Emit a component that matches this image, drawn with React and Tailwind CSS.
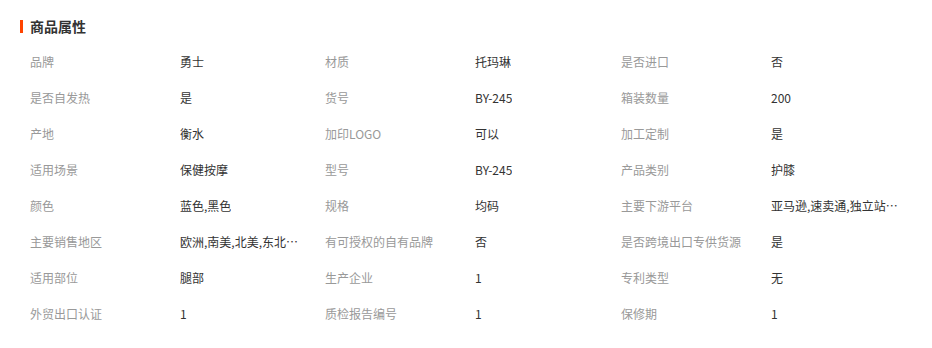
import React from 'react';

const rows = [
    ['品牌', '勇士', '材质', '托玛琳', '是否进口', '否'],
    ['是否自发热', '是', '货号', 'BY-245', '箱装数量', '200'],
    ['产地', '衡水', '加印LOGO', '可以', '加工定制', '是'],
    ['适用场景', '保健按摩', '型号', 'BY-245', '产品类别', '护膝'],
    ['颜色', '蓝色,黑色', '规格', '均码', '主要下游平台', '亚马逊,速卖通,独立站,eBay'],
    ['主要销售地区', '欧洲,南美,北美,东北亚,东南亚', '有可授权的自有品牌', '否', '是否跨境出口专供货源', '是'],
    ['适用部位', '腿部', '生产企业', '1', '专利类型', '无'],
    ['外贸出口认证', '1', '质检报告编号', '1', '保修期', '1'],
];

const Cell = ({ label, value, wide }) => (
    <div className="flex items-center h-[36px] text-[12px]">
        <div className="w-[150px] shrink-0 text-[#999] whitespace-nowrap">{label}</div>
        <div className={`${wide ? 'max-w-[128px]' : 'max-w-[120px]'} truncate text-[#333]`}>{value}</div>
    </div>
);

export default function App() {
    return (
        <div className="w-[932px] h-[348px] bg-white pt-[8px]" style={{ fontFamily: '"Noto Sans CJK SC", "Liberation Sans", sans-serif' }}>
            <div className="flex items-center h-[36px] pl-[20px]">
                <div className="w-[3px] h-[13px] bg-[#ff4400]" />
                <h2 className="ml-[7px] text-[14px] font-bold text-[#333]">商品属性</h2>
            </div>
            <div className="grid grid-cols-[295px_296px_296px] pl-[30px]">
                {rows.map((r, i) => (
                    <React.Fragment key={i}>
                        <Cell label={r[0]} value={r[1]} />
                        <Cell label={r[2]} value={r[3]} />
                        <Cell label={r[4]} value={r[5]} wide />
                    </React.Fragment>
                ))}
            </div>
        </div>
    );
}
